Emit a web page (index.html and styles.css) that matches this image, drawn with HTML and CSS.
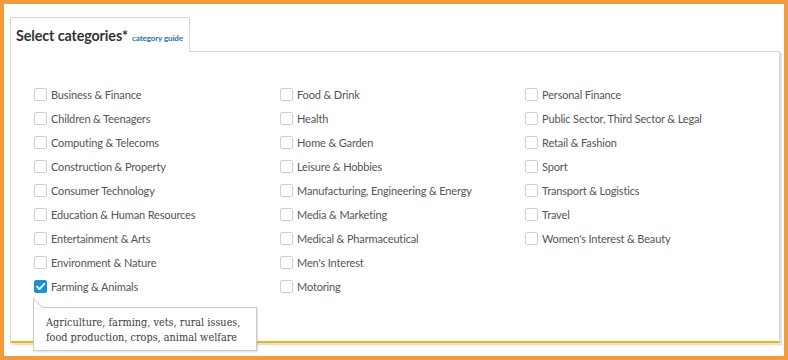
FILE: index.html
```html
<!DOCTYPE html>
<html>
<head>
<meta charset="utf-8">
<link rel="stylesheet" href="styles.css">
</head>
<body>
<div class="frame">
  <div class="tab">
    <span class="title">Select categories*</span>
    <a class="guide">category guide</a>
  </div>
  <div class="panel">
    <div class="grid">
      <div class="col">
        <label class="item"><span class="box"></span>Business &amp; Finance</label>
        <label class="item"><span class="box"></span>Children &amp; Teenagers</label>
        <label class="item"><span class="box"></span>Computing &amp; Telecoms</label>
        <label class="item"><span class="box"></span>Construction &amp; Property</label>
        <label class="item"><span class="box"></span>Consumer Technology</label>
        <label class="item"><span class="box"></span>Education &amp; Human Resources</label>
        <label class="item"><span class="box"></span>Entertainment &amp; Arts</label>
        <label class="item"><span class="box"></span>Environment &amp; Nature</label>
        <label class="item checked-item"><span class="box checked"><svg viewBox="0 0 13 13" width="13" height="13"><path d="M3 6.6 L5.5 9.1 L10.3 3.8" fill="none" stroke="#fff" stroke-width="1.8" stroke-linecap="round" stroke-linejoin="round"/></svg></span>Farming &amp; Animals
          <div class="tooltip">
            <svg class="notch" viewBox="0 0 10 10" width="10" height="10"><path d="M0.5 10.5 L0.5 0.5 L9 9 L10 9" fill="#fff" stroke="#c8c8c8" stroke-width="1"/><rect x="1" y="9.4" width="9" height="2" fill="#fff"/></svg>
            Agriculture, farming, vets, rural issues,<br>food production, crops, animal welfare
          </div>
        </label>
      </div>
      <div class="col">
        <label class="item"><span class="box"></span>Food &amp; Drink</label>
        <label class="item"><span class="box"></span>Health</label>
        <label class="item"><span class="box"></span>Home &amp; Garden</label>
        <label class="item"><span class="box"></span>Leisure &amp; Hobbies</label>
        <label class="item"><span class="box"></span>Manufacturing, Engineering &amp; Energy</label>
        <label class="item"><span class="box"></span>Media &amp; Marketing</label>
        <label class="item"><span class="box"></span>Medical &amp; Pharmaceutical</label>
        <label class="item"><span class="box"></span>Men's Interest</label>
        <label class="item"><span class="box"></span>Motoring</label>
      </div>
      <div class="col">
        <label class="item"><span class="box"></span>Personal Finance</label>
        <label class="item"><span class="box"></span>Public Sector, Third Sector &amp; Legal</label>
        <label class="item"><span class="box"></span>Retail &amp; Fashion</label>
        <label class="item"><span class="box"></span>Sport</label>
        <label class="item"><span class="box"></span>Transport &amp; Logistics</label>
        <label class="item"><span class="box"></span>Travel</label>
        <label class="item"><span class="box"></span>Women's Interest &amp; Beauty</label>
      </div>
    </div>
  </div>
</div>
</body>
</html>
```

FILE: styles.css
```css
* { box-sizing: border-box; }
html, body { margin: 0; padding: 0; background: #fff; }
body { font-family: Lato, "Open Sans", sans-serif; }
.frame {
  width: 788px;
  height: 360px;
  border: 4px solid #f39a3a;
  padding: 13px 5px 0 6px;
  position: relative;
  overflow: hidden;
}
.tab {
  display: flex;
  align-items: baseline;
  gap: 4px;
  width: 180px;
  height: 35px;
  padding: 9px 0 0 5px;
  border: 1px solid #d6d6d6;
  border-bottom: none;
  background: #fff;
  position: relative;
  z-index: 2;
  margin-bottom: -1px;
  white-space: nowrap;
}
.title {
  font-size: 14.3px;
  font-weight: 700;
  color: #333;
  letter-spacing: -0.1px;
}
.guide {
  font-size: 8px;
  font-weight: 700;
  color: #1f74b1;
  letter-spacing: -0.1px;
}
.panel {
  width: 770px;
  height: 292px;
  border: 1px solid #d6d6d6;
  border-bottom: 2px solid #f7b500;
  box-shadow: 2px 2px 1px #e2e2e2;
  padding: 30px 0 0 23px;
  background: #fff;
}
.grid {
  display: grid;
  grid-template-columns: 246px 245px 245px;
}
.col { display: flex; flex-direction: column; }
.item {
  display: flex;
  align-items: center;
  height: 24px;
  font-size: 11px;
  letter-spacing: -0.15px;
  color: #555;
  position: relative;
  white-space: nowrap;
}
.box {
  width: 13px;
  height: 13px;
  border: 1px solid #cfcfcf;
  border-radius: 2px;
  margin-right: 4px;
  background: #fff;
  flex: none;
  display: flex;
}
.box.checked {
  background: #1b8fd8;
  border-color: #1b8fd8;
}
.box.checked svg { margin: -1px; }
.tooltip {
  position: absolute;
  left: -1px;
  top: 33px;
  width: 224px;
  padding: 7px 0 5px 12px;
  border: 1px solid #c8c8c8;
  background: #fff;
  box-shadow: 1px 1px 2px rgba(0,0,0,0.12);
  font-family: "DejaVu Serif", serif;
  font-stretch: condensed;
  font-size: 10.8px;
  line-height: 15px;
  letter-spacing: 0;
  color: #3c3c3c;
  z-index: 3;
  white-space: nowrap;
}
.notch {
  position: absolute;
  left: -1px;
  top: -10px;
}
```
